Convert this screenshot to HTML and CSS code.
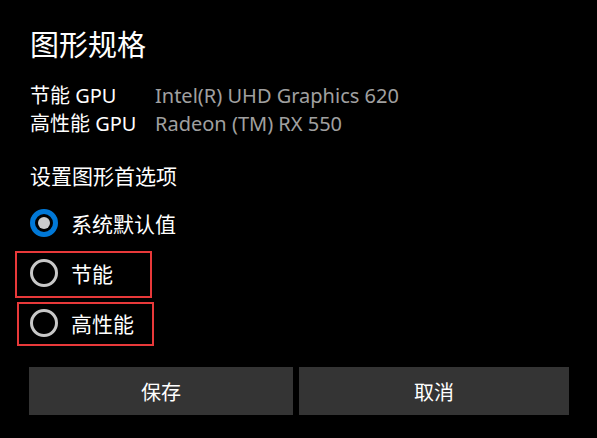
FILE: index.html
```html
<!DOCTYPE html>
<html lang="zh-CN">
<head>
  <meta charset="UTF-8" />
  <meta name="viewport" content="width=device-width, initial-scale=1.0"/>
  <title>图形规格</title>
  <link rel="stylesheet" href="styles.css">
</head>
<body>
  <main class="panel">
    <h1 class="title">图形规格</h1>

    <div class="specs">
      <span class="spec-name">节能 GPU</span>
      <span class="spec-value">Intel(R) UHD Graphics 620</span>
      <span class="spec-name">高性能 GPU</span>
      <span class="spec-value">Radeon (TM) RX 550</span>
    </div>

    <p class="section-label">设置图形首选项</p>

    <div class="options">
      <label class="option">
        <span class="radio checked"></span>
        <span>系统默认值</span>
      </label>
      <label class="option marked marked-1">
        <span class="radio"></span>
        <span>节能</span>
      </label>
      <label class="option marked marked-2">
        <span class="radio"></span>
        <span>高性能</span>
      </label>
    </div>

    <div class="actions">
      <button>保存</button>
      <button>取消</button>
    </div>
  </main>
</body>
</html>
```

FILE: styles.css
```css
*, *::before, *::after {
  box-sizing: border-box;
  margin: 0;
  padding: 0;
}
body {
  font-family: "Noto Sans", "Noto Sans CJK SC", sans-serif;
  background-color: #000;
  color: #fff;
}
.panel {
  padding: 25px 28px 0 30px;
}
.title {
  font-size: 29px;
  font-weight: normal;
  line-height: 40px;
}
.specs {
  display: grid;
  grid-template-columns: 125px 1fr;
  margin-top: 17px;
  font-size: 20px;
  line-height: 28px;
}
.spec-value {
  color: #a0a0a0;
}
.section-label {
  margin-top: 24px;
  font-size: 21px;
  line-height: 28px;
}
.options {
  margin-top: 8px;
}
.option {
  position: relative;
  display: flex;
  align-items: center;
  gap: 13px;
  height: 50px;
  font-size: 21px;
}
.radio {
  width: 28px;
  height: 28px;
  border: 3px solid #c8c8c8;
  border-radius: 50%;
}
.radio.checked {
  border: 5px solid #0078d7;
  display: flex;
  align-items: center;
  justify-content: center;
}
.radio.checked::after {
  content: "";
  width: 12px;
  height: 12px;
  border-radius: 50%;
  background: #cccccc;
}
/* red annotation frames */
.marked::after {
  content: "";
  position: absolute;
  border: 2px solid #e8393a;
}
.marked-1::after {
  left: -15px;
  top: 3px;
  width: 137px;
  height: 47px;
}
.marked-2::after {
  left: -13px;
  top: 4px;
  width: 137px;
  height: 44px;
}
.actions {
  display: grid;
  grid-template-columns: 264px 1fr;
  gap: 6px;
  margin-top: 19px;
  margin-left: -1px;
}
.actions button {
  height: 48px;
  background-color: #343434;
  color: #fff;
  border: none;
  font-family: inherit;
  font-size: 20px;
}
```
